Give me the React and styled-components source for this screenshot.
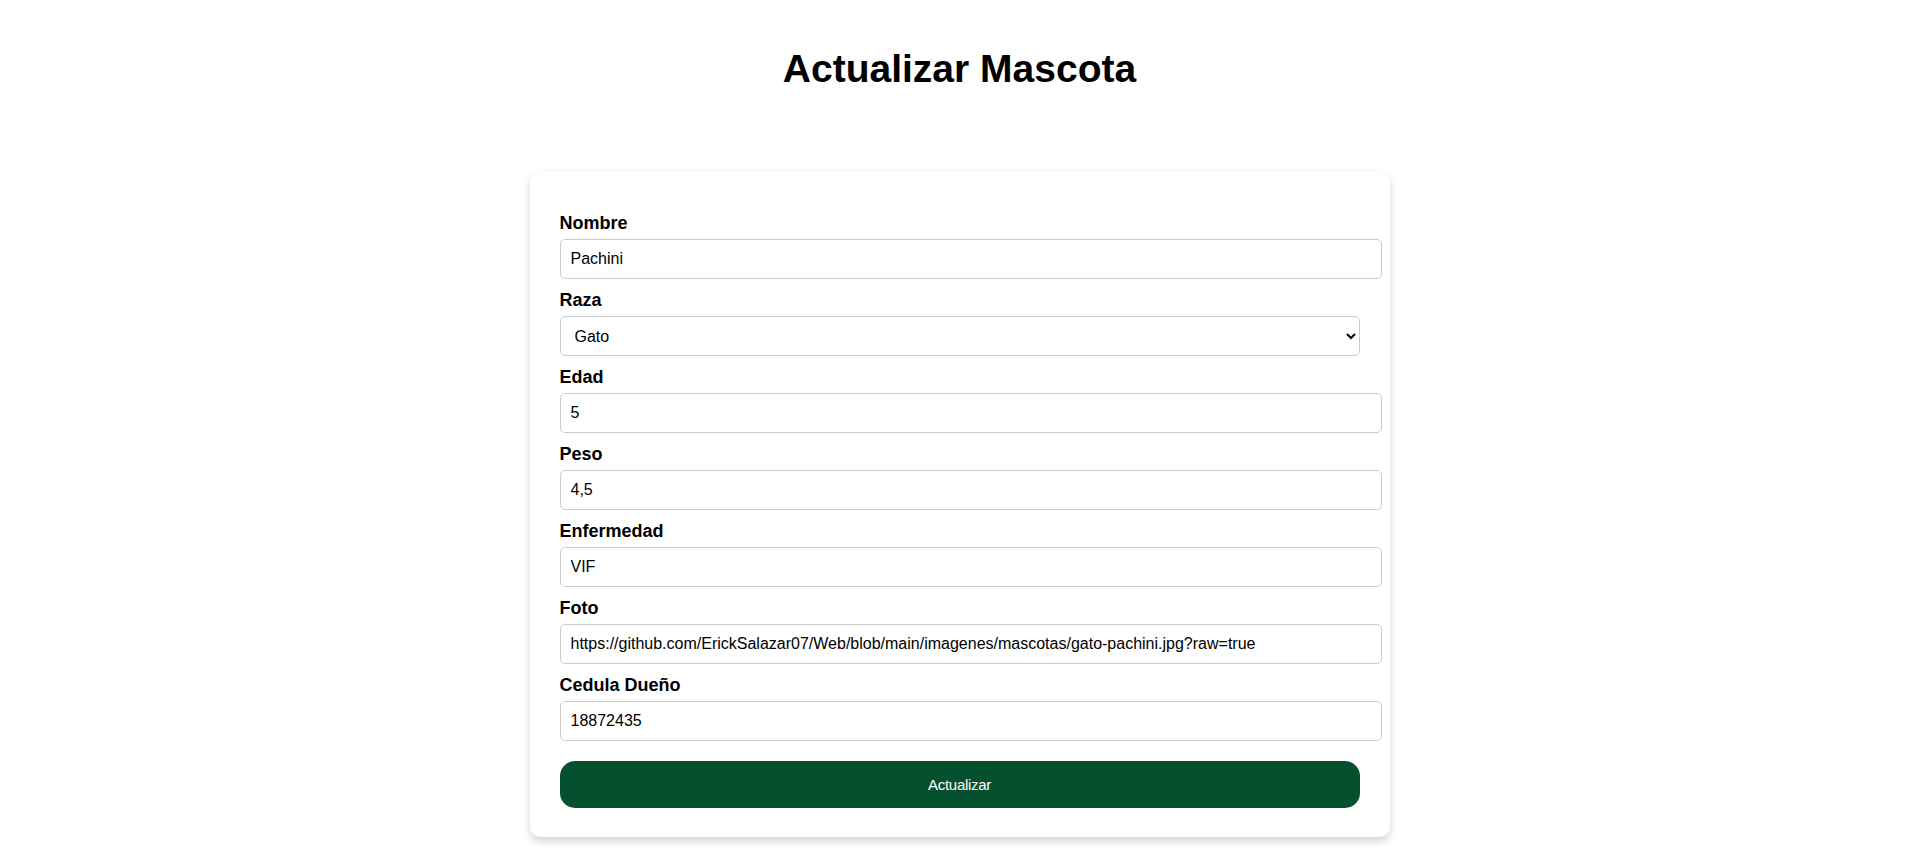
import React from 'react';
import styled, { createGlobalStyle } from 'styled-components';

const GlobalStyle = createGlobalStyle`
  html, body {
    margin: 0;
    padding: 0;
    background: #ffffff;
    font-family: "Liberation Sans", Arial, sans-serif;
  }
`;

const Page = styled.main`
  padding-top: 46px;
  padding-bottom: 24px;
`;

const Title = styled.h1`
  margin: 0;
  text-align: center;
  font-size: 39px;
  line-height: 45px;
  font-weight: 700;
  color: #000;
`;

const Card = styled.div`
  width: 800px;
  margin: 81px auto 0;
  padding: 39px 30px 29px;
  background: #ffffff;
  border-radius: 10px;
  box-shadow: 0 4px 9px rgba(0, 0, 0, 0.18);
`;

const Form = styled.form`
  display: flex;
  flex-direction: column;
  gap: 9px;
`;

const Field = styled.div`
  display: flex;
  flex-direction: column;
`;

const Label = styled.label`
  padding-top: 2px;
  font-size: 18px;
  line-height: 21px;
  font-weight: 700;
  color: #000;
  margin-bottom: 5px;
`;

const Input = styled.input`
  box-sizing: content-box;
  width: 100%;
  height: 18px;
  padding: 10px;
  margin: 0;
  border: 1px solid #cccccc;
  border-radius: 5px;
  font-family: "Liberation Sans", Arial, sans-serif;
  font-size: 16px;
  line-height: 18px;
  color: #000;
  background: #fff;
  outline: none;
`;

const Select = styled.select`
  box-sizing: border-box;
  width: 100%;
  height: 40px;
  padding: 0 10px;
  margin: 0;
  border: 1px solid #cccccc;
  border-radius: 5px;
  font-family: "Liberation Sans", Arial, sans-serif;
  font-size: 16px;
  color: #000;
  background: #fff;
`;

const Button = styled.button`
  margin-top: 11px;
  height: 47px;
  width: 100%;
  border: none;
  border-radius: 15px;
  background: #05502f;
  color: #ffffff;
  font-family: "Liberation Sans", Arial, sans-serif;
  font-size: 15px;
  letter-spacing: -0.3px;
  cursor: pointer;
`;

const fields = [
  { id: 'nombre', label: 'Nombre', value: 'Pachini' },
  { id: 'raza', label: 'Raza', value: 'Gato', options: ['Perro', 'Gato', 'Otro'] },
  { id: 'edad', label: 'Edad', value: '5' },
  { id: 'peso', label: 'Peso', value: '4,5' },
  { id: 'enfermedad', label: 'Enfermedad', value: 'VIF' },
  {
    id: 'foto',
    label: 'Foto',
    value: 'https://github.com/ErickSalazar07/Web/blob/main/imagenes/mascotas/gato-pachini.jpg?raw=true',
  },
  { id: 'cedula', label: 'Cedula Dueño', value: '18872435' },
];

export default function App() {
  return (
    <>
      <GlobalStyle />
      <Page>
        <Title>Actualizar Mascota</Title>
        <Card>
          <Form onSubmit={(e) => e.preventDefault()}>
            {fields.map((f) => (
              <Field key={f.id}>
                <Label htmlFor={f.id}>{f.label}</Label>
                {f.options ? (
                  <Select id={f.id} defaultValue={f.value}>
                    {f.options.map((o) => (
                      <option key={o} value={o}>
                        {o}
                      </option>
                    ))}
                  </Select>
                ) : (
                  <Input id={f.id} type="text" defaultValue={f.value} />
                )}
              </Field>
            ))}
            <Button type="submit">Actualizar</Button>
          </Form>
        </Card>
      </Page>
    </>
  );
}
